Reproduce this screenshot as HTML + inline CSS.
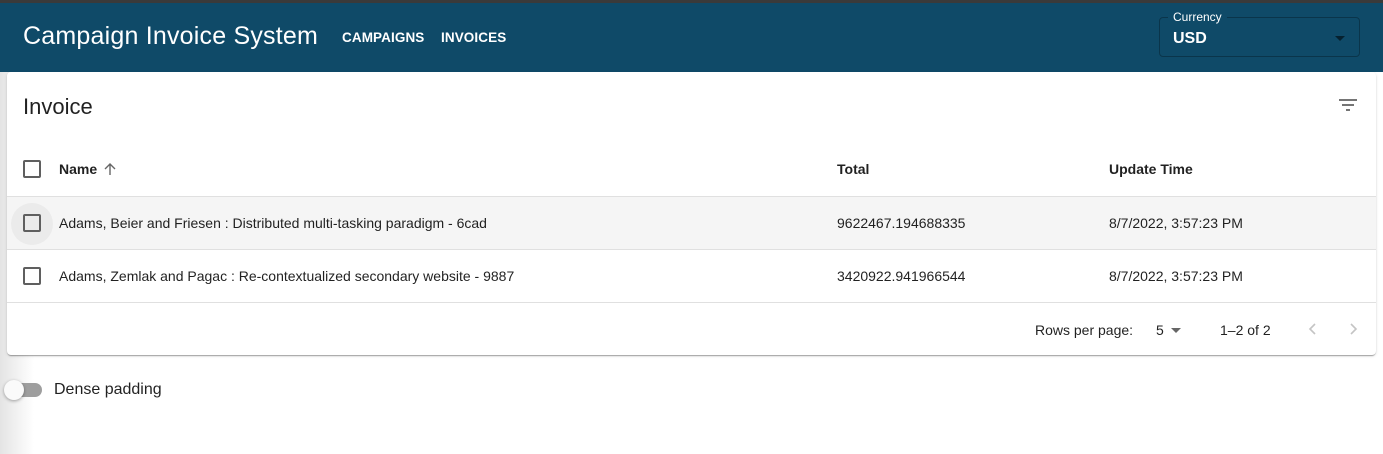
<!DOCTYPE html>
<html><head><meta charset="utf-8"><style>
*{box-sizing:border-box;margin:0;padding:0}
body{width:1383px;height:454px;overflow:hidden;font-family:"Liberation Sans",Arial,sans-serif;background:#fff;position:relative;color:rgba(0,0,0,.87)}
.lshade{position:absolute;left:0;top:0;width:34px;height:454px;background:linear-gradient(to right,#e4e4e4,#fff)}
.top{position:absolute;left:0;top:0;width:1383px;height:3px;background:#3a3a3a}
.hdr{position:absolute;left:0;top:3px;width:1383px;height:69px;background:#0f4a68;color:#fff}
.title{position:absolute;left:23px;top:19px;font-size:25px;letter-spacing:.2px}
.nav{position:absolute;top:27px;font-size:13.5px;font-weight:bold;letter-spacing:.1px}
.sel{position:absolute;left:1159px;top:14px;width:201px;height:40px;border:1px solid rgba(0,0,0,.28);border-radius:4px}
.sel .lbl{position:absolute;left:8px;top:-8px;font-size:12px;background:#0f4a68;padding:0 5px;line-height:14px}
.sel .v{position:absolute;left:13px;top:12px;font-size:16px;font-weight:bold}
.sel .ar{position:absolute;right:14px;top:18px;border-left:5px solid transparent;border-right:5px solid transparent;border-top:5px solid rgba(0,0,0,.55)}
.card{position:absolute;left:7px;top:72px;width:1369px;height:283px;background:#fff;border-radius:4px;box-shadow:0 2px 1px -1px rgba(0,0,0,.2),0 1px 1px rgba(0,0,0,.14),0 1px 3px rgba(0,0,0,.12)}
.h{position:absolute;left:16px;top:22px;font-size:22px}
.row{position:absolute;left:0;width:1369px;border-bottom:1px solid #e0e0e0;font-size:14px}
.cb{position:absolute;left:16px;width:18px;height:18px;border:2px solid #5f5f5f;border-radius:2px}
.c{position:absolute}
.foot{position:absolute;top:250px;font-size:14px}
</style></head><body>
<div class="lshade"></div>
<div class="top"></div>
<div class="hdr">
<div class="title">Campaign Invoice System</div>
<div class="nav" style="left:342px">CAMPAIGNS</div>
<div class="nav" style="left:441px">INVOICES</div>
<div class="sel"><span class="lbl">Currency</span><span class="v">USD</span><span class="ar"></span></div>
</div>
<div class="card">
<div class="h">Invoice</div>
<svg style="position:absolute;left:1331px;top:26px" width="20" height="14" viewBox="0 0 20 14"><rect x="1" y="1" width="18" height="2" fill="#757575"/><rect x="4" y="6" width="12" height="2" fill="#757575"/><rect x="8" y="11" width="4" height="2" fill="#757575"/></svg>
<div class="row" style="top:72px;height:53px;font-weight:bold">
<div class="cb" style="top:16px"></div>
<div class="c" style="left:52px;top:17px">Name</div>
<svg style="position:absolute;left:96px;top:18px" width="14" height="14" viewBox="0 0 14 14"><path d="M7 13V2M2 7l5-5 5 5" stroke="#666" stroke-width="1.4" fill="none"/></svg>
<div class="c" style="left:830px;top:17px">Total</div>
<div class="c" style="left:1102px;top:17px">Update Time</div>
</div>
<div class="row" style="top:125px;height:53px;background:#f5f5f5">
<div style="position:absolute;left:4px;top:6px;width:42px;height:42px;border-radius:50%;background:#ebebeb"></div>
<div class="cb" style="top:17px"></div>
<div class="c" style="left:52px;top:18px">Adams, Beier and Friesen : Distributed multi-tasking paradigm - 6cad</div>
<div class="c" style="left:830px;top:18px">9622467.194688335</div>
<div class="c" style="left:1102px;top:18px">8/7/2022, 3:57:23 PM</div>
</div>
<div class="row" style="top:178px;height:53px">
<div class="cb" style="top:17px"></div>
<div class="c" style="left:52px;top:18px">Adams, Zemlak and Pagac : Re-contextualized secondary website - 9887</div>
<div class="c" style="left:830px;top:18px">3420922.941966544</div>
<div class="c" style="left:1102px;top:18px">8/7/2022, 3:57:23 PM</div>
</div>
<div class="foot" style="left:1028px">Rows per page:</div>
<div class="foot" style="left:1149px">5</div>
<div style="position:absolute;left:1164px;top:256px;border-left:5px solid transparent;border-right:5px solid transparent;border-top:5px solid #666"></div>
<div class="foot" style="left:1213px">1–2 of 2</div>
<svg style="position:absolute;left:1300px;top:250px" width="12" height="14" viewBox="0 0 12 14"><path d="M8 2L3 7l5 5" stroke="#c4c4c4" stroke-width="1.6" fill="none"/></svg>
<svg style="position:absolute;left:1340px;top:250px" width="12" height="14" viewBox="0 0 12 14"><path d="M4 2l5 5-5 5" stroke="#c4c4c4" stroke-width="1.6" fill="none"/></svg>
</div>
<div style="position:absolute;left:8px;top:383px;width:34px;height:14px;border-radius:7px;background:#9e9e9e"></div>
<div style="position:absolute;left:4px;top:380px;width:20px;height:20px;border-radius:50%;background:#fafafa;box-shadow:0 1px 3px rgba(0,0,0,.35)"></div>
<div style="position:absolute;left:54px;top:381px;font-size:16px">Dense padding</div>
</body></html>
